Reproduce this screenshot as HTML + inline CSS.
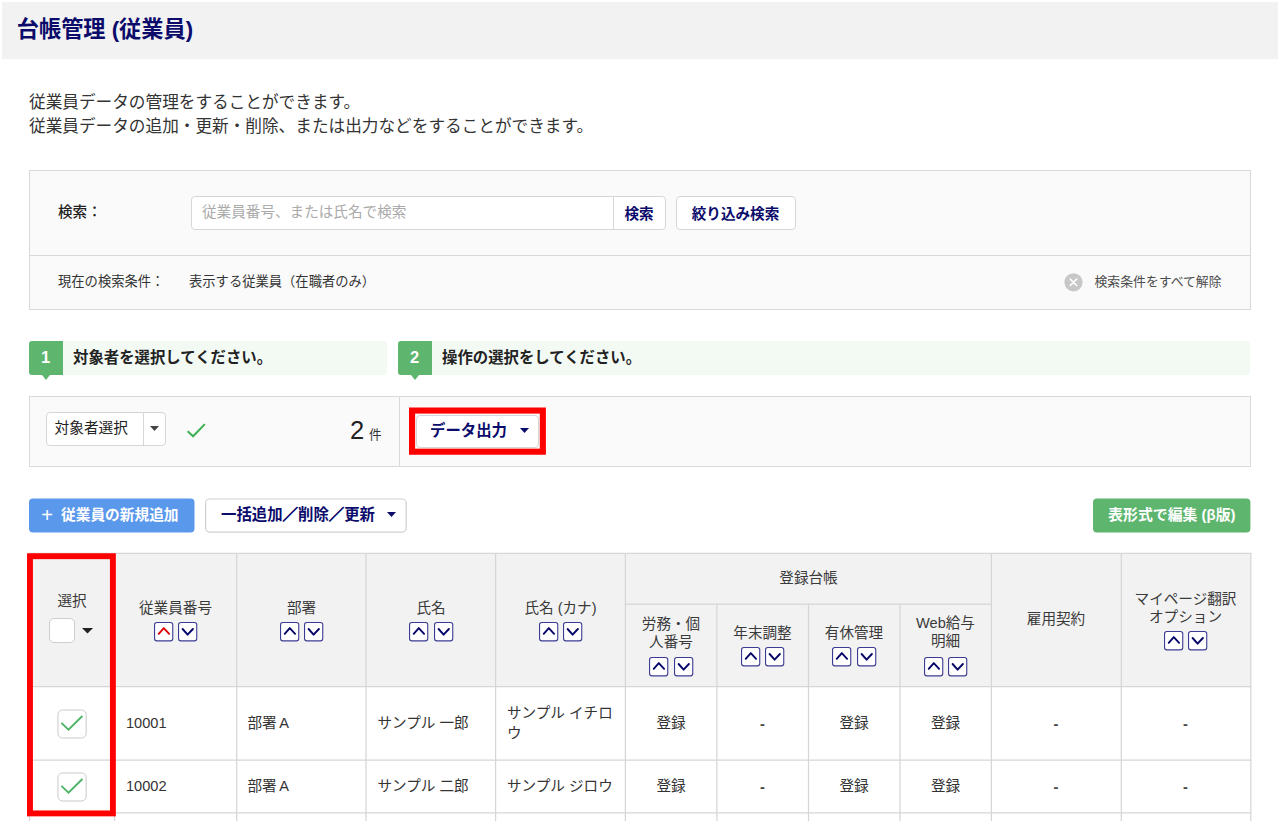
<!DOCTYPE html>
<html lang="ja">
<head>
<meta charset="utf-8">
<title>台帳管理 (従業員)</title>
<style>
*{box-sizing:border-box;margin:0;padding:0}
html,body{width:1280px;height:821px;overflow:hidden;background:#fff}
body{position:relative;font-family:"Liberation Sans","Noto Sans CJK JP",sans-serif;color:#333;font-size:14.6px}
.a{position:absolute;white-space:nowrap}
.c{position:absolute;white-space:nowrap;transform:translateX(-50%);text-align:center}
.box{position:absolute}
.navy{color:#0b0b6b;font-weight:bold}
.btn{position:absolute;background:#fff;border:1px solid #d6d6d6;border-radius:4px}
.vl{position:absolute;width:1px;background:#d9d9d9}
.hl{position:absolute;height:1px;background:#d9d9d9}
.sb{position:absolute;width:20px;height:20px;overflow:visible}
.th{font-size:14.6px;line-height:18.5px;color:#3a3a3a}
.td{font-size:14.6px;line-height:20px;color:#333}
.sl{-webkit-text-stroke:0.75px #0b0b6b}
.cb{position:absolute;background:#fff;border:1px solid #cdcdcd;border-radius:5px}
</style>
</head>
<body>

<!-- header band -->
<div class="box" style="left:2px;top:2px;width:1276px;height:57px;background:#f2f2f2"></div>
<div class="a navy" style="left:16.8px;top:15px;font-size:22.2px;line-height:30px">台帳管理 (従業員)</div>

<!-- description -->
<div class="a" style="left:29px;top:90.6px;font-size:16.65px;line-height:24px;color:#333">従業員データの管理をすることができます。<br>従業員データの追加・更新・削除、または出力などをすることができます。</div>

<!-- search panel -->
<div class="box" style="left:29px;top:170px;width:1222px;height:140px;background:#fafafa;border:1px solid #d9d9d9"></div>
<div class="hl" style="left:30px;top:255px;width:1220px"></div>
<div class="a" style="left:58px;top:202.1px;font-size:14.6px;line-height:20px;font-weight:500;color:#222">検索：</div>
<div class="box" style="left:191px;top:196px;width:423px;height:34px;background:#fff;border:1px solid #d6d6d6;border-radius:4px 0 0 4px"></div>
<div class="a" style="left:202px;top:202px;font-size:14.6px;line-height:20px;color:#aaa">従業員番号、または氏名で検索</div>
<div class="box" style="left:613px;top:196px;width:53px;height:34px;background:#fff;border:1px solid #d6d6d6;border-radius:0 4px 4px 0"></div>
<div class="c navy" style="left:639px;top:203.5px;font-size:14.6px;line-height:20px">検索</div>
<div class="btn" style="left:676px;top:196px;width:120px;height:34px"></div>
<div class="c navy" style="left:735.5px;top:203.5px;font-size:14.6px;line-height:20px">絞り込み検索</div>

<div class="a" style="left:58px;top:272px;font-size:13.3px;line-height:20px;color:#333">現在の検索条件：</div>
<div class="a" style="left:189px;top:272px;font-size:13.3px;line-height:20px;color:#333">表示する従業員（在職者のみ）</div>
<svg class="box" style="left:1064px;top:273px" width="19" height="19" viewBox="0 0 19 19"><circle cx="9.5" cy="9.3" r="9.1" fill="#c7c7c7"/><path d="M6.3 6.1l6.4 6.4M12.7 6.1l-6.4 6.4" stroke="#fff" stroke-width="1.6" stroke-linecap="round"/></svg>
<div class="a" style="left:1094.5px;top:272px;font-size:12.85px;line-height:20px;color:#4c4c4c">検索条件をすべて解除</div>

<!-- step banners -->
<div class="box" style="left:29px;top:341px;width:358px;height:34px;background:#f3faf4;border-radius:3px"></div>
<div class="box" style="left:29px;top:341px;width:33.5px;height:34px;background:#5db56e;border-radius:3px 0 0 3px"></div>
<div class="box" style="left:41.5px;top:374.5px;width:0;height:0;border-left:4px solid transparent;border-right:4px solid transparent;border-top:5.3px solid #5db56e"></div>
<div class="c" style="left:45.5px;top:347px;font-size:16.5px;line-height:20px;font-weight:bold;color:#fff">1</div>
<div class="a" style="left:73px;top:347.5px;font-size:15.4px;line-height:20px;font-weight:bold;color:#222">対象者を選択してください。</div>

<div class="box" style="left:398px;top:341px;width:852.3px;height:34px;background:#f3faf4;border-radius:3px"></div>
<div class="box" style="left:398px;top:341px;width:33.5px;height:34px;background:#5db56e;border-radius:3px 0 0 3px"></div>
<div class="box" style="left:410.5px;top:374.5px;width:0;height:0;border-left:4px solid transparent;border-right:4px solid transparent;border-top:5.3px solid #5db56e"></div>
<div class="c" style="left:414.5px;top:347px;font-size:16.5px;line-height:20px;font-weight:bold;color:#fff">2</div>
<div class="a" style="left:442px;top:347.5px;font-size:15.4px;line-height:20px;font-weight:bold;color:#222">操作の選択をしてください。</div>

<!-- selection panel -->
<div class="box" style="left:29px;top:396px;width:1222px;height:71px;background:#fafafa;border:1px solid #d9d9d9"></div>
<div class="vl" style="left:399px;top:397px;height:69px"></div>
<div class="btn" style="left:46px;top:412px;width:120px;height:33.5px"></div>
<div class="vl" style="left:143px;top:413px;height:32px;background:#d6d6d6"></div>
<div class="a" style="left:54.5px;top:418px;font-size:14.7px;line-height:20px;color:#222">対象者選択</div>
<svg class="box" style="left:149.9px;top:426.1px;overflow:visible" width="9" height="5.1"><path d="M0 0H9L4.5 5.1Z" fill="#444"/></svg>
<svg class="box" style="left:185px;top:421px" width="24" height="20" viewBox="0 0 24 20"><path d="M2.65 10.2l5.45 5.05L19.85 3.1" fill="none" stroke="#3eb052" stroke-width="2"/></svg>
<div class="a" style="left:350px;top:414px;font-size:25.5px;line-height:32px;color:#222">2</div>
<div class="a" style="left:369px;top:426px;font-size:12.6px;line-height:18px;color:#333">件</div>

<div class="btn" style="left:416px;top:414.5px;width:123px;height:33.5px"></div>
<div class="a navy" style="left:430px;top:421px;font-size:15.4px;line-height:20px">データ出力</div>
<svg class="box" style="left:519.75px;top:428.4px;overflow:visible" width="9" height="5.1"><path d="M0 0H9L4.5 5.1Z" fill="#0b0b6b"/></svg>
<svg class="box" style="left:400px;top:400px" width="160" height="62" viewBox="400 400 160 62"><rect x="412.05" y="410.55" width="130.8" height="41.15" fill="none" stroke="#ff0000" stroke-width="6.1"/></svg>

<!-- action buttons -->
<svg class="box" style="left:0;top:490px" width="1280" height="50" viewBox="0 490 1280 50"><rect x="29" y="498.5" width="165.5" height="34" rx="4" fill="#5a98ec"/><rect x="205.6" y="499" width="200.6" height="33.1" rx="4" fill="#fff" stroke="#cfcfcf" stroke-width="1.2"/><rect x="1093" y="498.6" width="157.4" height="33.8" rx="4" fill="#5db56e"/></svg>
<div class="a" style="left:41.3px;top:505px;font-size:20px;line-height:20px;color:#fff;font-weight:normal">+</div>
<div class="a" style="left:61px;top:505px;font-size:14.7px;line-height:20px;color:#fff;font-weight:bold">従業員の新規追加</div>

<div class="a navy" style="left:221px;top:505px;font-size:15.4px;line-height:20px">一括追加<span class="sl">／</span>削除<span class="sl">／</span>更新</div>
<svg class="box" style="left:387.4px;top:512.4px;overflow:visible" width="9" height="5.1"><path d="M0 0H9L4.5 5.1Z" fill="#0b0b6b"/></svg>

<div class="c" style="left:1171.8px;top:505px;font-size:14.9px;line-height:20px;color:#fff;font-weight:bold">表形式で編集 (β版)</div>

<!-- table -->
<div class="box" style="left:29px;top:553px;width:1222px;height:134px;background:#f2f2f2"></div>
<svg class="box" style="left:0;top:545px" width="1280" height="276" viewBox="0 545 1280 276" fill="none" stroke="#d6d6d6" stroke-width="1.25"><path d="M28.9 553.35 H1251.4"/><path d="M28.9 686.6 H1251.4"/><path d="M28.9 760 H1251.4"/><path d="M28.9 812.8 H1251.4"/><path d="M625.4 604 H991.4"/><path d="M29.5 553.35 V821"/><path d="M114.5 553.35 V821"/><path d="M236.7 553.35 V821"/><path d="M366 553.35 V821"/><path d="M495.6 553.35 V821"/><path d="M625.4 553.35 V821"/><path d="M991.4 553.35 V821"/><path d="M1121.3 553.35 V821"/><path d="M1250.8 553.35 V821"/><path d="M716.9 604 V821"/><path d="M808.5 604 V821"/><path d="M900 604 V821"/></svg>

<!-- header text -->
<div class="c th" style="left:72px;top:591.6px">選択</div>
<div class="cb" style="left:49px;top:617.5px;width:25.5px;height:25.5px"></div>
<svg class="box" style="left:81.9px;top:627.8px;overflow:visible" width="11.05" height="5.6"><path d="M0 0H11.05L5.525 5.6Z" fill="#222"/></svg>

<div class="c th" style="left:175.5px;top:598.5px">従業員番号</div>
<div class="c th" style="left:301.5px;top:598.5px">部署</div>
<div class="c th" style="left:431px;top:598.5px">氏名</div>
<div class="c th" style="left:560.5px;top:598.5px">氏名 (カナ)</div>
<div class="c th" style="left:808.5px;top:569px">登録台帳</div>
<div class="c th" style="left:671px;top:615px;line-height:18.2px">労務・個<br>人番号</div>
<div class="c th" style="left:762.5px;top:624px">年末調整</div>
<div class="c th" style="left:854px;top:624px">有休管理</div>
<div class="c th" style="left:945.5px;top:614px;line-height:18.2px">Web給与<br>明細</div>
<div class="c th" style="left:1056px;top:610px">雇用契約</div>
<div class="c th" style="left:1185.5px;top:589.5px">マイページ翻訳<br>オプション</div>

<!-- sort buttons -->
<div id="sorts">
<svg class="sb" style="left:153.9px;top:621.55px" viewBox="0 0 20 20"><rect x="0.55" y="0.55" width="18.2" height="18.3" rx="2.3" fill="#fff" stroke="#3b3b93" stroke-width="1.1"/><path d="M4.7 11.8L9.8 6.1l5.3 5.7" fill="none" stroke="#e00008" stroke-width="1.9" stroke-linecap="round" stroke-linejoin="round"/></svg>
<svg class="sb" style="left:177.95px;top:621.55px" viewBox="0 0 20 20"><rect x="0.55" y="0.55" width="18.2" height="18.3" rx="2.3" fill="#fff" stroke="#3b3b93" stroke-width="1.1"/><path d="M4.6 7L9.6 12.7l5.3-5.7" fill="none" stroke="#06066a" stroke-width="1.9" stroke-linecap="round" stroke-linejoin="round"/></svg>
<svg class="sb" style="left:279.95px;top:621.55px" viewBox="0 0 20 20"><rect x="0.55" y="0.55" width="18.2" height="18.3" rx="2.3" fill="#fff" stroke="#3b3b93" stroke-width="1.1"/><path d="M4.7 11.8L9.8 6.1l5.3 5.7" fill="none" stroke="#06066a" stroke-width="1.9" stroke-linecap="round" stroke-linejoin="round"/></svg>
<svg class="sb" style="left:304px;top:621.55px" viewBox="0 0 20 20"><rect x="0.55" y="0.55" width="18.2" height="18.3" rx="2.3" fill="#fff" stroke="#3b3b93" stroke-width="1.1"/><path d="M4.6 7L9.6 12.7l5.3-5.7" fill="none" stroke="#06066a" stroke-width="1.9" stroke-linecap="round" stroke-linejoin="round"/></svg>
<svg class="sb" style="left:409.45px;top:621.55px" viewBox="0 0 20 20"><rect x="0.55" y="0.55" width="18.2" height="18.3" rx="2.3" fill="#fff" stroke="#3b3b93" stroke-width="1.1"/><path d="M4.7 11.8L9.8 6.1l5.3 5.7" fill="none" stroke="#06066a" stroke-width="1.9" stroke-linecap="round" stroke-linejoin="round"/></svg>
<svg class="sb" style="left:433.5px;top:621.55px" viewBox="0 0 20 20"><rect x="0.55" y="0.55" width="18.2" height="18.3" rx="2.3" fill="#fff" stroke="#3b3b93" stroke-width="1.1"/><path d="M4.6 7L9.6 12.7l5.3-5.7" fill="none" stroke="#06066a" stroke-width="1.9" stroke-linecap="round" stroke-linejoin="round"/></svg>
<svg class="sb" style="left:538.95px;top:621.55px" viewBox="0 0 20 20"><rect x="0.55" y="0.55" width="18.2" height="18.3" rx="2.3" fill="#fff" stroke="#3b3b93" stroke-width="1.1"/><path d="M4.7 11.8L9.8 6.1l5.3 5.7" fill="none" stroke="#06066a" stroke-width="1.9" stroke-linecap="round" stroke-linejoin="round"/></svg>
<svg class="sb" style="left:563px;top:621.55px" viewBox="0 0 20 20"><rect x="0.55" y="0.55" width="18.2" height="18.3" rx="2.3" fill="#fff" stroke="#3b3b93" stroke-width="1.1"/><path d="M4.6 7L9.6 12.7l5.3-5.7" fill="none" stroke="#06066a" stroke-width="1.9" stroke-linecap="round" stroke-linejoin="round"/></svg>
<svg class="sb" style="left:649.45px;top:657px" viewBox="0 0 20 20"><rect x="0.55" y="0.55" width="18.2" height="18.3" rx="2.3" fill="#fff" stroke="#3b3b93" stroke-width="1.1"/><path d="M4.7 11.8L9.8 6.1l5.3 5.7" fill="none" stroke="#06066a" stroke-width="1.9" stroke-linecap="round" stroke-linejoin="round"/></svg>
<svg class="sb" style="left:673.5px;top:657px" viewBox="0 0 20 20"><rect x="0.55" y="0.55" width="18.2" height="18.3" rx="2.3" fill="#fff" stroke="#3b3b93" stroke-width="1.1"/><path d="M4.6 7L9.6 12.7l5.3-5.7" fill="none" stroke="#06066a" stroke-width="1.9" stroke-linecap="round" stroke-linejoin="round"/></svg>
<svg class="sb" style="left:740.95px;top:647px" viewBox="0 0 20 20"><rect x="0.55" y="0.55" width="18.2" height="18.3" rx="2.3" fill="#fff" stroke="#3b3b93" stroke-width="1.1"/><path d="M4.7 11.8L9.8 6.1l5.3 5.7" fill="none" stroke="#06066a" stroke-width="1.9" stroke-linecap="round" stroke-linejoin="round"/></svg>
<svg class="sb" style="left:765px;top:647px" viewBox="0 0 20 20"><rect x="0.55" y="0.55" width="18.2" height="18.3" rx="2.3" fill="#fff" stroke="#3b3b93" stroke-width="1.1"/><path d="M4.6 7L9.6 12.7l5.3-5.7" fill="none" stroke="#06066a" stroke-width="1.9" stroke-linecap="round" stroke-linejoin="round"/></svg>
<svg class="sb" style="left:832.45px;top:647px" viewBox="0 0 20 20"><rect x="0.55" y="0.55" width="18.2" height="18.3" rx="2.3" fill="#fff" stroke="#3b3b93" stroke-width="1.1"/><path d="M4.7 11.8L9.8 6.1l5.3 5.7" fill="none" stroke="#06066a" stroke-width="1.9" stroke-linecap="round" stroke-linejoin="round"/></svg>
<svg class="sb" style="left:856.5px;top:647px" viewBox="0 0 20 20"><rect x="0.55" y="0.55" width="18.2" height="18.3" rx="2.3" fill="#fff" stroke="#3b3b93" stroke-width="1.1"/><path d="M4.6 7L9.6 12.7l5.3-5.7" fill="none" stroke="#06066a" stroke-width="1.9" stroke-linecap="round" stroke-linejoin="round"/></svg>
<svg class="sb" style="left:923.95px;top:657px" viewBox="0 0 20 20"><rect x="0.55" y="0.55" width="18.2" height="18.3" rx="2.3" fill="#fff" stroke="#3b3b93" stroke-width="1.1"/><path d="M4.7 11.8L9.8 6.1l5.3 5.7" fill="none" stroke="#06066a" stroke-width="1.9" stroke-linecap="round" stroke-linejoin="round"/></svg>
<svg class="sb" style="left:948px;top:657px" viewBox="0 0 20 20"><rect x="0.55" y="0.55" width="18.2" height="18.3" rx="2.3" fill="#fff" stroke="#3b3b93" stroke-width="1.1"/><path d="M4.6 7L9.6 12.7l5.3-5.7" fill="none" stroke="#06066a" stroke-width="1.9" stroke-linecap="round" stroke-linejoin="round"/></svg>
<svg class="sb" style="left:1163.95px;top:631px" viewBox="0 0 20 20"><rect x="0.55" y="0.55" width="18.2" height="18.3" rx="2.3" fill="#fff" stroke="#3b3b93" stroke-width="1.1"/><path d="M4.7 11.8L9.8 6.1l5.3 5.7" fill="none" stroke="#06066a" stroke-width="1.9" stroke-linecap="round" stroke-linejoin="round"/></svg>
<svg class="sb" style="left:1188px;top:631px" viewBox="0 0 20 20"><rect x="0.55" y="0.55" width="18.2" height="18.3" rx="2.3" fill="#fff" stroke="#3b3b93" stroke-width="1.1"/><path d="M4.6 7L9.6 12.7l5.3-5.7" fill="none" stroke="#06066a" stroke-width="1.9" stroke-linecap="round" stroke-linejoin="round"/></svg>
</div>

<!-- data rows -->
<svg class="box" style="left:57px;top:708.5px" width="31" height="31" viewBox="0 0 31 31"><rect x="0.95" y="1" width="28.2" height="28" rx="4.6" fill="#fff" stroke="#c9c9c9" stroke-width="1"/><path d="M4.4 13.9l7.1 6.8L25.4 7" fill="none" stroke="#4cb365" stroke-width="1.8" stroke-linejoin="miter"/></svg>
<svg class="box" style="left:57px;top:771.5px" width="31" height="31" viewBox="0 0 31 31"><rect x="0.95" y="1" width="28.2" height="28" rx="4.6" fill="#fff" stroke="#c9c9c9" stroke-width="1"/><path d="M4.4 13.9l7.1 6.8L25.4 7" fill="none" stroke="#4cb365" stroke-width="1.8" stroke-linejoin="miter"/></svg>

<div class="a td" style="left:126px;top:713px">10001</div>
<div class="a td" style="left:247.5px;top:713px">部署<span style="letter-spacing:-1.5px"> </span>A</div>
<div class="a td" style="left:377.5px;top:713px">サンプル 一郎</div>
<div class="a td" style="left:507px;top:702.5px">サンプル イチロ<br>ウ</div>
<div class="c td" style="left:671px;top:713px">登録</div>
<div class="c td" style="left:762.5px;top:713.5px;font-weight:bold;color:#444">-</div>
<div class="c td" style="left:854px;top:713px">登録</div>
<div class="c td" style="left:945.5px;top:713px">登録</div>
<div class="c td" style="left:1056px;top:713.5px;font-weight:bold;color:#444">-</div>
<div class="c td" style="left:1185.5px;top:713.5px;font-weight:bold;color:#444">-</div>

<div class="a td" style="left:126px;top:776px">10002</div>
<div class="a td" style="left:247.5px;top:776px">部署<span style="letter-spacing:-1.5px"> </span>A</div>
<div class="a td" style="left:377.5px;top:776px">サンプル 二郎</div>
<div class="a td" style="left:507px;top:776px">サンプル ジロウ</div>
<div class="c td" style="left:671px;top:776px">登録</div>
<div class="c td" style="left:762.5px;top:776.5px;font-weight:bold;color:#444">-</div>
<div class="c td" style="left:854px;top:776px">登録</div>
<div class="c td" style="left:945.5px;top:776px">登録</div>
<div class="c td" style="left:1056px;top:776.5px;font-weight:bold;color:#444">-</div>
<div class="c td" style="left:1185.5px;top:776.5px;font-weight:bold;color:#444">-</div>

<!-- red highlight on select column -->
<svg class="box" style="left:20px;top:545px" width="110" height="276" viewBox="20 545 110 276"><rect x="29.98" y="556.2" width="82.9" height="257.2" fill="none" stroke="#ff0000" stroke-width="5.9"/></svg>

</body>
</html>
